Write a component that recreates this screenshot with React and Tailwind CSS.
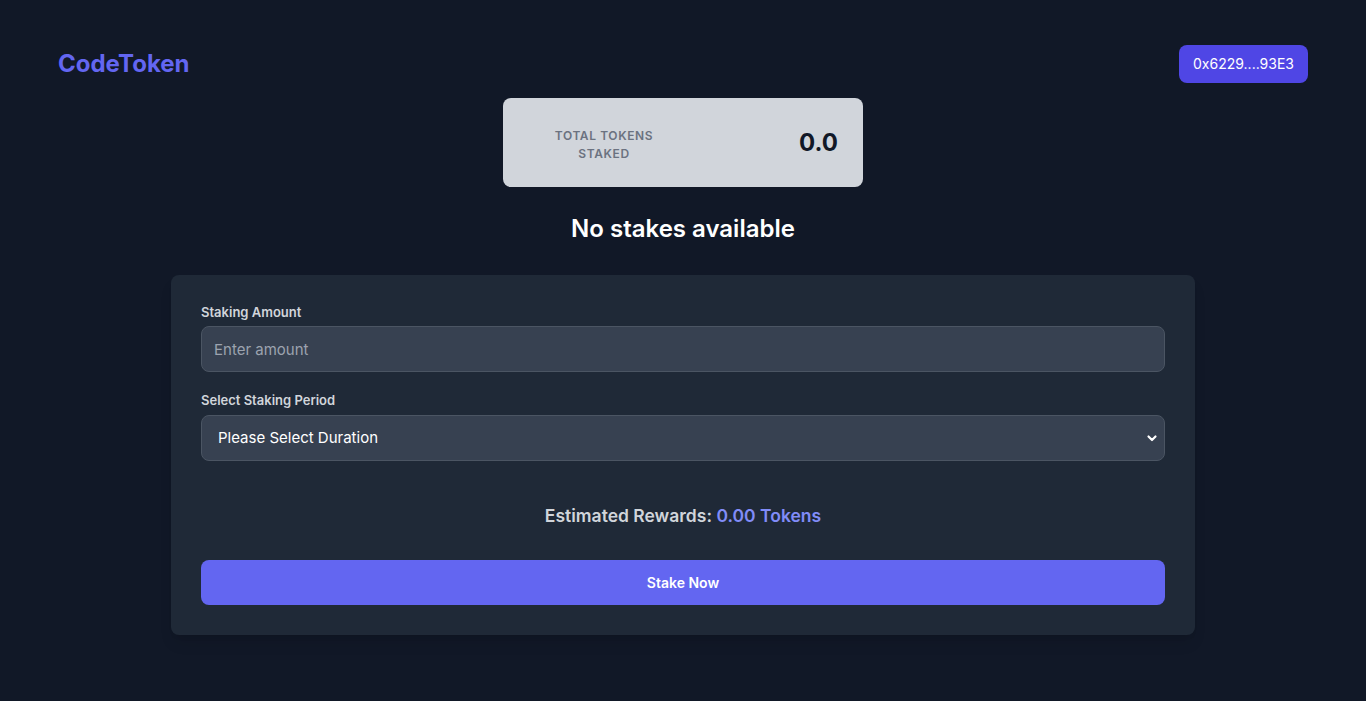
import React, { useState } from 'react'

const Header = () => (
  <div className="flex items-center justify-between px-[58px] pt-[45px]">
    <h1 className="text-2xl font-bold text-[#6366f1]">CodeToken</h1>
    <button className="h-[38px] rounded-lg bg-[#4f46e5] px-[14px] text-sm text-white">
      0x6229....93E3
    </button>
  </div>
)

const TotalStaked = ({ total }) => (
  <div className="mx-auto mt-[15px] flex h-[89px] w-[360px] items-center justify-between rounded-lg bg-[#d1d5db] pl-6 pr-[25px]">
    <div className="w-[154px] pt-[5px] text-center text-xs font-semibold uppercase leading-[18px] tracking-wider text-[#6b7280]">
      Total Tokens
      <br />
      Staked
    </div>
    <div className="text-2xl font-bold text-[#111827]">{total}</div>
  </div>
)

const StakeForm = () => {
  const [amount, setAmount] = useState('')
  const [period, setPeriod] = useState('')

  return (
    <div className="mx-auto mt-[30px] w-[1024px] rounded-lg bg-[#1f2937] px-[30px] pb-[30px] pt-[27px] shadow-lg">
      <label className="mb-1 block text-[13px] font-semibold leading-5 text-[#d1d5db]">Staking Amount</label>
      <input
        value={amount}
        onChange={(e) => setAmount(e.target.value)}
        placeholder="Enter amount"
        className="block h-[46px] w-full rounded-lg border border-[#4b5563] bg-[#374151] px-3 text-[15px] text-white placeholder-[#9ca3af] outline-none"
      />

      <label className="mb-[5px] mt-[18px] block text-[13px] font-semibold leading-5 text-[#d1d5db]">Select Staking Period</label>
      <div className="relative">
        <select
          value={period}
          onChange={(e) => setPeriod(e.target.value)}
          className="block h-[46px] w-full appearance-none rounded-lg border border-[#4b5563] bg-[#374151] px-4 pt-px text-[15px] text-white outline-none"
        >
          <option value="">Please Select Duration</option>
          <option value="30">30 Days</option>
          <option value="90">90 Days</option>
          <option value="180">180 Days</option>
        </select>
        <svg
          className="pointer-events-none absolute right-[7px] top-1/2 h-3 w-3 -translate-y-1/2 text-white"
          viewBox="0 0 12 12"
          fill="none"
          stroke="currentColor"
          strokeWidth="2.2"
          strokeLinecap="round"
          strokeLinejoin="round"
        >
          <path d="M2.5 4.5 6 8l3.5-3.5" />
        </svg>
      </div>

      <p className="mt-[41px] text-center text-[17.5px] font-semibold leading-7 text-[#d1d5db]">
        Estimated Rewards: <span className="text-[#818cf8]">0.00 Tokens</span>
      </p>

      <button className="mt-[30px] h-[45px] w-full rounded-lg bg-[#6366f1] text-sm font-semibold text-white">
        Stake Now
      </button>
    </div>
  )
}

export default function App() {
  return (
    <div className="min-h-[701px] bg-[#111827] font-['Inter',sans-serif]">
      <Header />
      <TotalStaked total="0.0" />
      <h2 className="mt-[26px] text-center text-2xl font-semibold leading-8 text-white">No stakes available</h2>
      <StakeForm />
    </div>
  )
}
